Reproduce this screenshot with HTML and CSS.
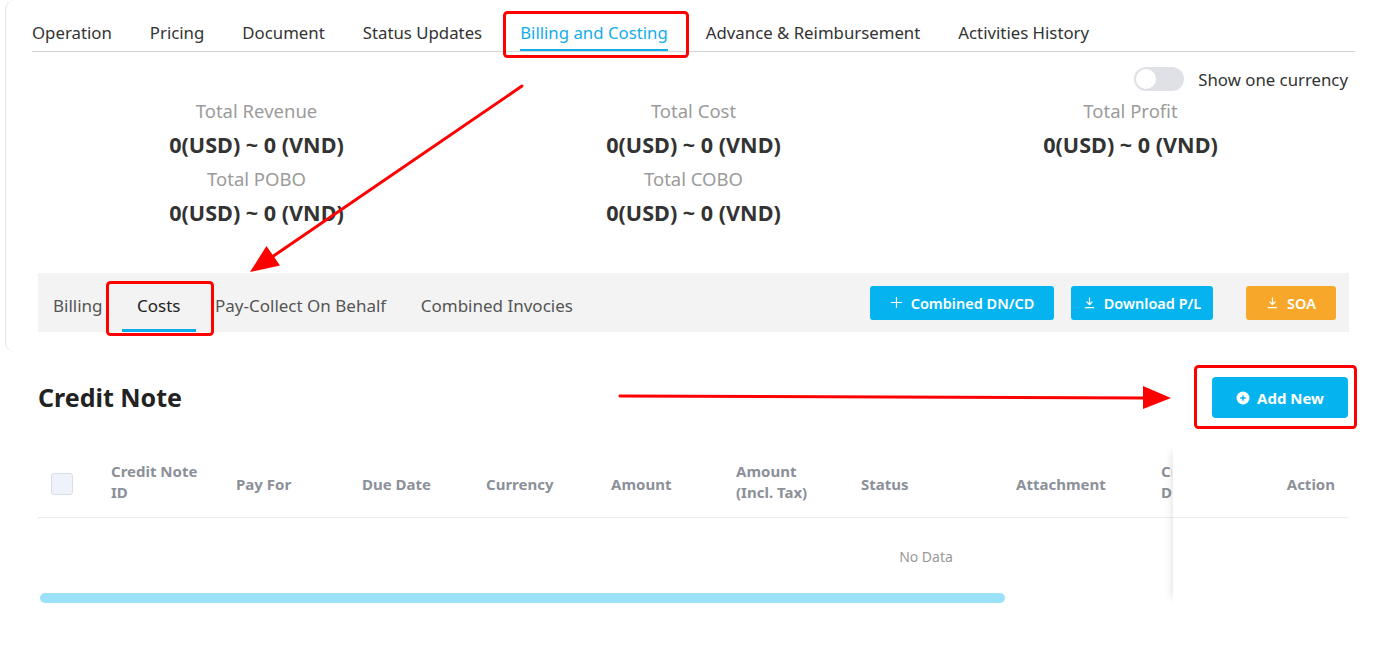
FILE: index.html
```html
<!DOCTYPE html>
<html lang="en">
<head>
<meta charset="utf-8">
<title>Billing and Costing</title>
<link rel="stylesheet" href="styles.css">
</head>
<body>
<div class="card">
  <nav class="tabs">
    <span class="tab">Operation</span>
    <span class="tab">Pricing</span>
    <span class="tab">Document</span>
    <span class="tab">Status Updates</span>
    <span class="tab active">Billing and Costing</span>
    <span class="tab">Advance &amp; Reimbursement</span>
    <span class="tab">Activities History</span>
  </nav>
  <div class="toggle-row">
    <span class="switch"><span class="knob"></span></span>
    <span class="toggle-label">Show one currency</span>
  </div>
  <div class="stats">
    <div class="stat-col">
      <div class="label">Total Revenue</div>
      <div class="value">0(USD) ~ 0 (VND)</div>
      <div class="label">Total POBO</div>
      <div class="value">0(USD) ~ 0 (VND)</div>
    </div>
    <div class="stat-col">
      <div class="label">Total Cost</div>
      <div class="value">0(USD) ~ 0 (VND)</div>
      <div class="label">Total COBO</div>
      <div class="value">0(USD) ~ 0 (VND)</div>
    </div>
    <div class="stat-col">
      <div class="label">Total Profit</div>
      <div class="value">0(USD) ~ 0 (VND)</div>
    </div>
  </div>
  <div class="subbar">
    <div class="subtabs">
      <span class="subtab">Billing</span>
      <span class="subtab active">Costs</span>
      <span class="subtab">Pay-Collect On Behalf</span>
      <span class="subtab">Combined Invocies</span>
    </div>
    <div class="actions">
      <button class="btn btn-cyan btn-combined">
        <svg class="ico" viewBox="0 0 14 14"><path d="M7 1v12M1 7h12" stroke="#fff" stroke-width="1.3" fill="none"/></svg>
        Combined DN/CD
      </button>
      <button class="btn btn-cyan btn-download">
        <svg class="ico" viewBox="0 0 14 14"><path d="M7 1.5v7.5M3.8 6l3.2 3.2L10.2 6M2 12.5h10" stroke="#fff" stroke-width="1.3" fill="none"/></svg>
        Download P/L
      </button>
      <button class="btn btn-orange btn-soa">
        <svg class="ico" viewBox="0 0 14 14"><path d="M7 1.5v7.5M3.8 6l3.2 3.2L10.2 6M2 12.5h10" stroke="#fff" stroke-width="1.3" fill="none"/></svg>
        SOA
      </button>
    </div>
  </div>
</div>

<section class="credit">
  <div class="credit-head">
    <h2 class="credit-title">Credit Note</h2>
    <button class="btn btn-cyan btn-add">
      <svg class="ico-add" viewBox="0 0 14 14"><circle cx="7" cy="7" r="6.5" fill="#fff"/><path d="M7 4.2v5.6M4.2 7h5.6" stroke="#05b4ef" stroke-width="1.4"/></svg>
      Add New
    </button>
  </div>
  <div class="table-wrap">
    <div class="table-scroll">
      <div class="thead">
        <div class="th c-check"><span class="checkbox"></span></div>
        <div class="th c1">Credit Note<br>ID</div>
        <div class="th c2 single">Pay For</div>
        <div class="th c3 single">Due Date</div>
        <div class="th c4 single">Currency</div>
        <div class="th c5 single">Amount</div>
        <div class="th c6">Amount<br>(Incl. Tax)</div>
        <div class="th c7 single">Status</div>
        <div class="th c8 single">Attachment</div>
        <div class="th c9">Created<br>Date</div>
      </div>
      <div class="empty">No Data</div>
    </div>
    <div class="scrollbar"><div class="thumb"></div></div>
    <div class="fixed-col">
      <div class="th th-action"><span class="single">Action</span></div>
    </div>
  </div>
</section>

<svg class="annot" viewBox="0 0 1384 653" width="1384" height="653">
  <rect x="504.5" y="12.5" width="183" height="44" rx="3" fill="none" stroke="#f00" stroke-width="3"/>
  <rect x="107.5" y="282.5" width="105" height="52" rx="3" fill="none" stroke="#f00" stroke-width="3"/>
  <rect x="1195.5" y="366.5" width="160" height="61" rx="3" fill="none" stroke="#f00" stroke-width="3"/>
  <line x1="522" y1="86" x2="272" y2="257" stroke="#f00" stroke-width="3" stroke-linecap="round"/>
  <polygon points="250,272 266.5,246 280,265.5" fill="#f00"/>
  <line x1="620" y1="396" x2="1145" y2="398" stroke="#f00" stroke-width="3" stroke-linecap="round"/>
  <polygon points="1171,398 1143,386 1143,409" fill="#f00"/>
</svg>
</body>
</html>
```

FILE: styles.css
```css
* { box-sizing: border-box; }

html, body {
  margin: 0;
  padding: 0;
  background: #fff;
}

body {
  font-family: "Noto Sans", "Open Sans", Arial, sans-serif;
  color: #333;
  position: relative;
  width: 1384px;
  height: 653px;
  overflow: hidden;
}

.card {
  margin-left: 5px;
  border-left: 1px solid #e3e3e3;
  border-radius: 10px 0 0 10px;
  padding: 0 29px 20px 26px;
}

/* main tabs */
.tabs {
  display: flex;
  gap: 38px;
  border-bottom: 1px solid #d6d6d6;
  height: 52px;
}

.tab {
  font-size: 16.8px;
  line-height: 24px;
  padding-top: 21px;
  height: 51px;
  color: #333;
  white-space: nowrap;
}

.tab.active {
  color: #13acea;
  border-bottom: 2px solid #13acea;
}

/* toggle */
.toggle-row {
  display: flex;
  justify-content: flex-end;
  align-items: center;
  gap: 14px;
  margin-top: 15px;
  margin-right: 7px;
  height: 24px;
}

.switch {
  width: 50px;
  height: 24px;
  border-radius: 12px;
  background: #dfe1e6;
  display: flex;
  align-items: center;
  padding-left: 2px;
}

.knob {
  width: 20px;
  height: 20px;
  border-radius: 50%;
  background: #fff;
}

.toggle-label {
  font-size: 16.8px;
  color: #333;
}

/* stats */
.stats {
  display: grid;
  grid-template-columns: repeat(3, 1fr);
  margin: 3px 6px 0 6px;
  text-align: center;
  height: 140px;
}

.label {
  font-size: 18.5px;
  line-height: 34px;
  color: #9b9b9b;
}

.value {
  font-size: 21.6px;
  line-height: 34px;
  font-weight: 700;
  color: #333;
}

/* sub bar */
.subbar {
  margin: 39px 6px 0 6px;
  height: 59px;
  background: #f3f3f3;
  display: flex;
  justify-content: space-between;
  align-items: center;
}

.subtabs {
  display: flex;
  height: 59px;
  align-items: stretch;
  gap: 4.5px;
}

.subtab {
  font-size: 17px;
  color: #555;
  padding: 8px 15px 0 15px;
  display: flex;
  align-items: center;
  white-space: nowrap;
  border-bottom: 3px solid transparent;
}

.subtab.active {
  color: #222;
  border-bottom-color: #13acea;
}

.actions {
  display: flex;
  align-items: center;
  margin-right: 13px;
}

.btn {
  border: 0;
  font-family: inherit;
  color: #fff;
  font-size: 14.5px;
  font-weight: 600;
  border-radius: 3px;
  display: inline-flex;
  align-items: center;
  justify-content: center;
  gap: 8px;
  cursor: pointer;
}

.btn-cyan { background: #05b4ef; }
.btn-orange { background: #f7a82a; }

.btn-combined { width: 184px; height: 34px; }
.btn-download { width: 142px; height: 34px; margin-left: 17px; }
.btn-soa { width: 90px; height: 34px; margin-left: 33px; }

.ico { width: 13px; height: 13px; }

/* credit note */
.credit {
  padding: 0 36px 0 38px;
}

.credit-head {
  margin-top: 25px;
  display: flex;
  justify-content: space-between;
  align-items: center;
  height: 41px;
}

.credit-title {
  margin: 0;
  font-size: 25px;
  font-weight: 700;
  color: #222;
  position: relative;
  top: -1px;
}

.btn-add {
  width: 136px;
  height: 41px;
  border-radius: 4px;
  font-size: 15px;
  font-weight: 700;
  gap: 7px;
}

.ico-add { width: 14px; height: 14px; }

.table-wrap {
  margin-top: 29px;
  position: relative;
  overflow: hidden;
  height: 156px;
}

.table-scroll {
  width: 1776px;
}

.thead {
  display: flex;
  height: 71px;
  border-bottom: 1px solid #ececec;
  align-items: center;
}

.th {
  font-size: 15px;
  font-weight: 700;
  color: #8c9099;
  line-height: 21px;
  padding: 0 13px;
  flex: none;
}

.single {
  padding-top: 4px;
}

.c-check { width: 60px; }
.c1 { width: 125px; }
.c2 { width: 126px; }
.c3 { width: 124px; }
.c4 { width: 125px; }
.c5 { width: 125px; }
.c6 { width: 125px; }
.c7 { width: 155px; }
.c8 { width: 145px; }
.c9 {
  width: 24px;
  padding-right: 0;
  overflow: hidden;
  white-space: nowrap;
}

.checkbox {
  display: block;
  width: 22px;
  height: 22px;
  border-radius: 3px;
  background: #eef2fb;
  border: 1px solid #d7dce8;
  margin-top: 4px;
}

.empty {
  height: 75px;
  display: flex;
  align-items: center;
  justify-content: center;
  font-size: 14px;
  color: #999;
  padding-top: 2px;
}

.scrollbar {
  height: 10px;
}

.thumb {
  margin-left: 2px;
  width: 965px;
  height: 10px;
  border-radius: 5px;
  background: #9be1f8;
}

.fixed-col {
  position: absolute;
  top: 0;
  right: 0;
  bottom: 0;
  width: 175px;
  background: #fff;
  box-shadow: -6px 0 8px -5px rgba(0, 0, 0, 0.12);
}

.th-action {
  height: 71px;
  border-bottom: 1px solid #ececec;
  display: flex;
  align-items: center;
  justify-content: flex-end;
}

/* annotation overlay */
.annot {
  position: absolute;
  left: 0;
  top: 0;
  pointer-events: none;
}
```
